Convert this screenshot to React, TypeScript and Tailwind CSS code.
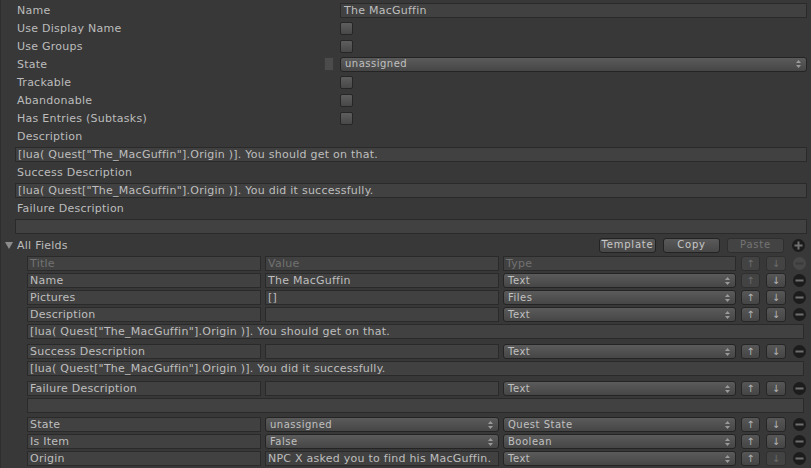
import React from 'react';

const font = "font-['DejaVu_Sans',sans-serif]";

const Checkbox: React.FC = () => (
  <div className="w-[13px] h-[13px] rounded-[2px] border border-[#262626] bg-linear-to-b from-[#5e5e5e] to-[#484848]" />
);

const UpDownArrows: React.FC = () => (
  <svg width="5" height="8" viewBox="0 0 5 8" className="shrink-0">
    <path d="M0 3 L2.5 0 L5 3 Z" fill="#9a9a9a" />
    <path d="M0 5 L2.5 8 L5 5 Z" fill="#9a9a9a" />
  </svg>
);

const Popup: React.FC<{ text: string; w: string }> = ({ text, w }) => (
  <div
    className={`${w} h-[15px] rounded-[3px] border border-[#242424] bg-linear-to-b from-[#5b5b5b] to-[#464646] flex items-center justify-between pl-[4px] pr-[5px] text-[10px] tracking-[0.5px] text-[#c0c0c0] leading-none`}
  >
    <span>{text}</span>
    <UpDownArrows />
  </div>
);

const Field: React.FC<{ text?: string; w: string; dim?: boolean; pl?: string }> = ({ text, w, dim, pl = 'pl-[2px]' }) => (
  <div
    className={`${w} h-[15px] bg-[#414141] border border-[#2a2a2a] flex items-center ${pl} text-[11px] tracking-[0.25px] leading-none whitespace-nowrap overflow-hidden ${
      dim ? 'text-[#727272]' : 'text-[#bebebe]'
    }`}
  >
    {text}
  </div>
);

const ArrowBtn: React.FC<{ dir: 'up' | 'down'; disabled?: boolean; w: string }> = ({ dir, disabled, w }) => (
  <div
    className={`${w} h-[15px] rounded-[3px] border flex items-center justify-center text-[10px] leading-none ${
      disabled
        ? 'border-[#2f2f2f] bg-[#434343] text-[#6c6c6c]'
        : 'border-[#262626] bg-linear-to-b from-[#575757] to-[#454545] text-[#b4b4b4]'
    }`}
  >
    {dir === 'up' ? '↑' : '↓'}
  </div>
);

const MinusIcon: React.FC<{ disabled?: boolean }> = ({ disabled }) => (
  <svg width="13" height="13" viewBox="0 0 13 13" className="shrink-0">
    <circle cx="6.5" cy="6.5" r="6.5" fill={disabled ? '#474747' : '#1c1c1c'} />
    <rect x="2.5" y="5.5" width="8" height="2" fill={disabled ? '#3a3a3a' : '#6f6f6f'} />
  </svg>
);

const PlusIcon: React.FC = () => (
  <svg width="13" height="13" viewBox="0 0 13 13" className="shrink-0">
    <circle cx="6.5" cy="6.5" r="6.5" fill="#1c1c1c" />
    <rect x="2.5" y="5.5" width="8" height="2" fill="#707070" />
    <rect x="5.5" y="2.5" width="2" height="8" fill="#707070" />
  </svg>
);

const Button: React.FC<{ label: string; disabled?: boolean }> = ({ label, disabled }) => (
  <div
    className={`w-[57px] h-[15px] rounded-[3px] border flex items-center justify-center text-[10px] tracking-[0.8px] leading-none ${
      disabled
        ? 'border-[#2e2e2e] bg-[#434343] text-[#747474]'
        : 'border-[#232323] bg-linear-to-b from-[#5a5a5a] to-[#474747] text-[#c8c8c8]'
    }`}
  >
    {label}
  </div>
);

type Row = {
  title: string;
  value?: string;
  valuePopup?: boolean;
  type: string;
  upOff?: boolean;
  downOff?: boolean;
  long?: string;
};

const rows: Row[] = [
  { title: 'Name', value: 'The MacGuffin', type: 'Text', upOff: true },
  { title: 'Pictures', value: '[]', type: 'Files' },
  { title: 'Description', value: '', type: 'Text', long: '[lua( Quest["The_MacGuffin"].Origin )]. You should get on that.' },
  { title: 'Success Description', value: '', type: 'Text', long: '[lua( Quest["The_MacGuffin"].Origin )]. You did it successfully.' },
  { title: 'Failure Description', value: '', type: 'Text', long: '' },
  { title: 'State', value: 'unassigned', valuePopup: true, type: 'Quest State' },
  { title: 'Is Item', value: 'False', valuePopup: true, type: 'Boolean' },
  { title: 'Origin', value: 'NPC X asked you to find his MacGuffin.', type: 'Text', downOff: true },
];

const labelCls = 'text-[11px] tracking-[0.25px] leading-none text-[#bcbcbc]';

const TopRow: React.FC<{ label: string; children?: React.ReactNode }> = ({ label, children }) => (
  <div className="h-[18px] flex items-center">
    <div className={`w-[339px] pl-[16px] ${labelCls}`}>{label}</div>
    {children}
  </div>
);

const TopText: React.FC<{ text?: string }> = ({ text }) => (
  <div className="h-[18px] flex items-center pl-[14px]">
    <Field w="w-[792px]" text={text} />
  </div>
);

export default function App() {
  return (
    <div className={`${font} w-[811px] h-[468px] bg-[#383838] border-l border-[#2e2e2e] overflow-hidden`}>
      <div className="pt-[1px]">
        <TopRow label="Name">
          <Field w="w-[467px]" text="The MacGuffin" pl="pl-[3px]" />
        </TopRow>
        <TopRow label="Use Display Name">
          <Checkbox />
        </TopRow>
        <TopRow label="Use Groups">
          <Checkbox />
        </TopRow>
        <div className="h-[18px] flex items-center">
          <div className={`w-[323px] pl-[16px] ${labelCls}`}>State</div>
          <div className="w-[10px] h-[14px] bg-[#4b4b4b] border border-[#3a3a3a] mr-[6px]" />
          <Popup text="unassigned" w="w-[467px]" />
        </div>
        <TopRow label="Trackable">
          <Checkbox />
        </TopRow>
        <TopRow label="Abandonable">
          <Checkbox />
        </TopRow>
        <TopRow label="Has Entries (Subtasks)">
          <Checkbox />
        </TopRow>
        <TopRow label="Description" />
        <TopText text={'[lua( Quest["The_MacGuffin"].Origin )]. You should get on that.'} />
        <TopRow label="Success Description" />
        <TopText text={'[lua( Quest["The_MacGuffin"].Origin )]. You did it successfully.'} />
        <TopRow label="Failure Description" />
        <TopText />
      </div>

      <div className="h-[20px] flex items-center">
        <div className="flex items-center pl-[4px] flex-1">
          <svg width="8" height="7" viewBox="0 0 8 7" className="mr-[4px]">
            <path d="M0 0 L8 0 L4 7 Z" fill="#8c8c8c" />
          </svg>
          <span className={labelCls}>All Fields</span>
        </div>
        <div className="flex items-center gap-[7px] pr-[6px]">
          <Button label="Template" />
          <Button label="Copy" />
          <Button label="Paste" disabled />
          <div className="ml-[1px]">
            <PlusIcon />
          </div>
        </div>
      </div>

      <div className="pt-[1px] pl-[26px]">
        <div className="flex items-center mb-[2px]">
          <Field w="w-[234px]" text="Title" dim />
          <div className="ml-[4px]">
            <Field w="w-[234px]" text="Value" dim />
          </div>
          <div className="ml-[4px]">
            <Field w="w-[233px]" text="Type" dim />
          </div>
          <div className="ml-[5px]">
            <ArrowBtn dir="up" disabled w="w-[19px]" />
          </div>
          <div className="ml-[6px]">
            <ArrowBtn dir="down" disabled w="w-[20px]" />
          </div>
          <div className="ml-[7px]">
            <MinusIcon disabled />
          </div>
        </div>
        {rows.map((r, i) => (
          <div key={i} className={i === 5 ? 'mt-[4px]' : i === 7 ? 'mt-[1px]' : ''}>
            <div className="flex items-center mb-[2px]">
              <Field w="w-[234px]" text={r.title} />
              <div className="ml-[4px]">
                {r.valuePopup ? <Popup text={r.value || ''} w="w-[234px]" /> : <Field w="w-[234px]" text={r.value} />}
              </div>
              <div className="ml-[4px]">
                <Popup text={r.type} w="w-[233px]" />
              </div>
              <div className="ml-[5px]">
                <ArrowBtn dir="up" disabled={r.upOff} w="w-[19px]" />
              </div>
              <div className="ml-[6px]">
                <ArrowBtn dir="down" disabled={r.downOff} w="w-[20px]" />
              </div>
              <div className="ml-[7px]">
                <MinusIcon />
              </div>
            </div>
            {r.long !== undefined && (
              <div className={i === 4 ? 'mb-[2px]' : 'mb-[5px]'}>
                <Field w="w-[777px]" text={r.long} />
              </div>
            )}
          </div>
        ))}
      </div>
    </div>
  );
}
